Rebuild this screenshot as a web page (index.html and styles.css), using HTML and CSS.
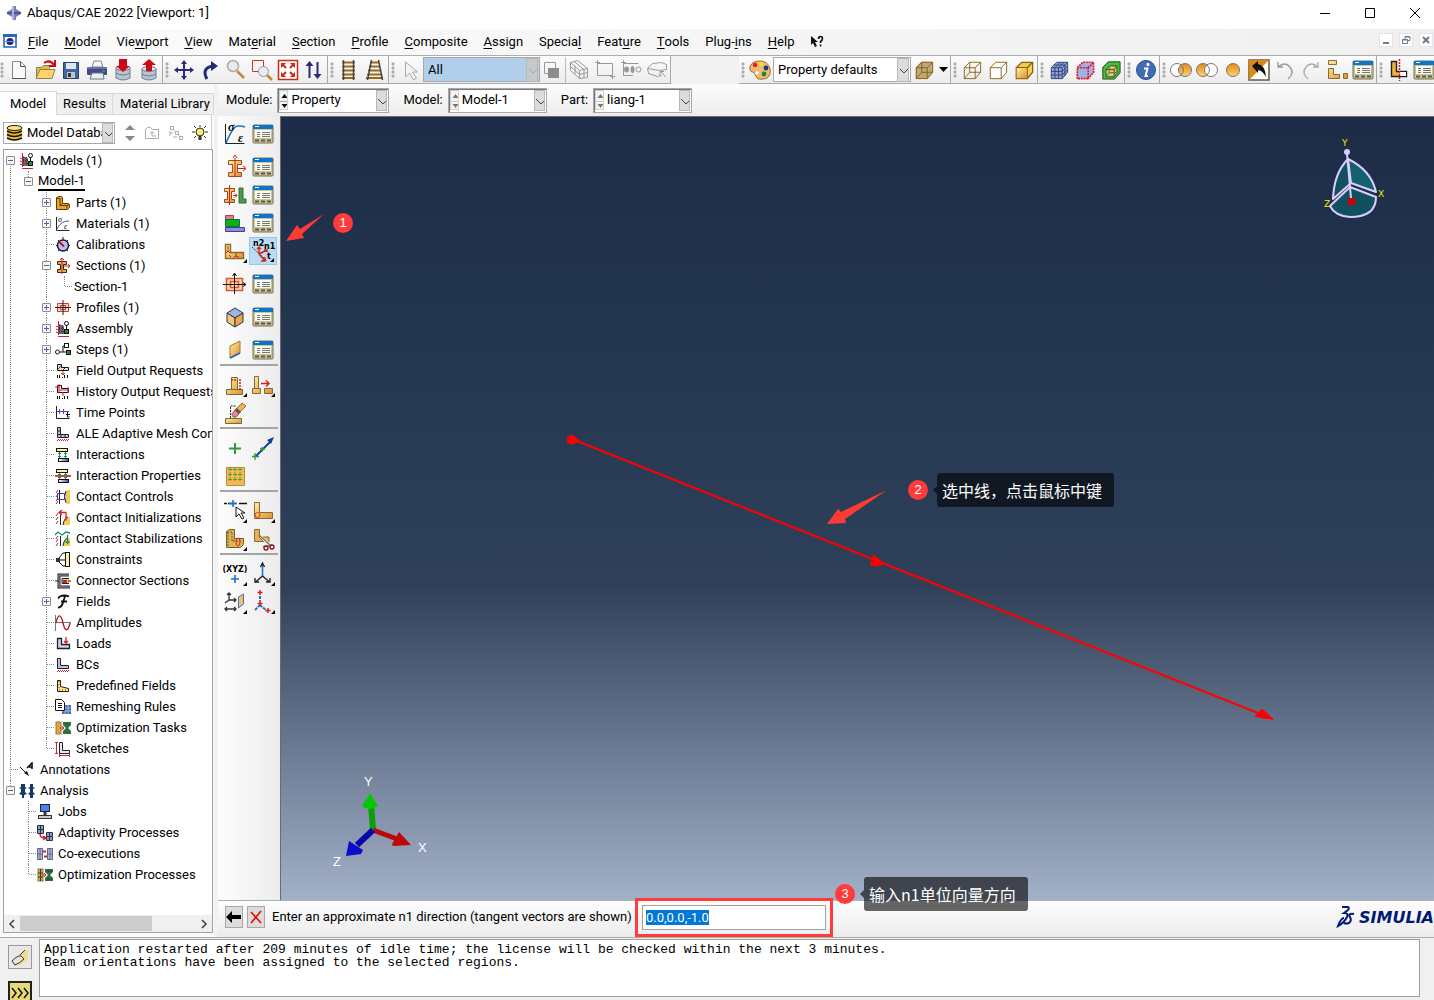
FILE: index.html
```html
<!DOCTYPE html>
<html lang="en">
<head>
<meta charset="utf-8">
<title>Abaqus/CAE 2022 [Viewport: 1]</title>
<link rel="stylesheet" href="styles.css">
</head>
<body>
<svg class="defs" aria-hidden="true">
  <defs>
    <linearGradient id="gold" x1="0" y1="0" x2="1" y2="1"><stop offset="0" stop-color="#fff0a0"/><stop offset="1" stop-color="#dc9030"/></linearGradient>
    <linearGradient id="orange" x1="0" y1="0" x2="0" y2="1"><stop offset="0" stop-color="#e08a10"/><stop offset="1" stop-color="#ffd27a"/></linearGradient>
    <linearGradient id="bluefade"><stop offset="0" stop-color="#fff"/><stop offset="1" stop-color="#3050a0"/></linearGradient>
    <!-- manager window -->
    <symbol id="mgr" viewBox="0 0 22 20"><rect x="1" y="1" width="20" height="18" rx="1" fill="#c9c39a" stroke="#77714e"/><rect x="1" y="1" width="20" height="4" fill="#0b74cc"/><path d="M3 2.500h4" stroke="#fff"/><rect x="3" y="6" width="16" height="8" fill="#fbfbf4"/><path d="M5 8.500h3m2 0h8M5 10.500h3m2 0h8M5 12.500h3m2 0h8" stroke="#77766c"/><path d="M3 16.500h4m2 0h4m2 0h4" stroke="#5c5a44" stroke-width="2"/></symbol>
    <symbol id="cubewire" viewBox="0 0 22 22"><path d="M2.500 8.500h12v12h-12zM8.500 2.500h12v11h-12zM2.500 8.500l6-6M14.500 8.500l6-6M14.500 20.500l6-7M2.500 20.500l6-7" fill="none" stroke="#86600f"/></symbol>
    <symbol id="tLmodel" viewBox="0 0 16 16"><path d="M4 3v10h10v-4h-5V5z" fill="#6b6b7c"/><path d="M4.500 4v10M7.500 4v10M4 7.500h5M4 10.500h9" stroke="#333" stroke-dasharray="1 1"/><path d="M3.500 0v14M1 5l2 1M1 8l2 1M1 11l2 1M3 15.500h11" stroke="#d02030"/><circle cx="11.500" cy="2.500" r="2" fill="#fff" stroke="#111"/><path d="M11.500 4v5" stroke="#111"/><rect x="9.500" y="8.500" width="4" height="4" fill="#2f8a2f" stroke="#111"/></symbol>
    <symbol id="tPart" viewBox="0 0 16 16"><path d="M1.500 2.500l2-1h3l1 1v6l6 0 1 1v3l-2 2h-11z" fill="#e8a32c" stroke="#5e3a06"/><path d="M2 3.500h3v7h7v3m-7-3l2-2m5 2l2-1" fill="none" stroke="#5e3a06"/></symbol>
    <symbol id="tMat" viewBox="0 0 16 16"><path d="M1.500 1v13.500h13" fill="none" stroke="#222"/><path d="M2 13C4 9 7 5 14 5" fill="none" stroke="#3a4fb0"/><text x="3" y="6" class="greek">σ</text><text x="9" y="13" class="greek">ε</text></symbol>
    <symbol id="tCal" viewBox="0 0 16 16"><circle cx="8" cy="8.500" r="5.500" fill="#b4c4f0" stroke="#181830" stroke-width="1.400"/><path d="M8 0v3M1 8.500h2m10 0h2M3 3l2 2m8-2l-2 2M3 14l2-2m8 2l-2-2" stroke="#181830"/><path d="M4 4.500l5 5" stroke="#c01020" stroke-width="2"/></symbol>
    <symbol id="tSec" viewBox="0 0 16 16"><path d="M2.500 3.500h9v3h-3v5h3v3h-9v-3h3v-5h-3z" fill="#e8b050" stroke="#3a2808"/><path d="M7 0v16M9 8h6m-2-2l2 2-2 2M5 2l2-2 2 2" fill="none" stroke="#d02030"/></symbol>
    <symbol id="tProf" viewBox="0 0 16 16"><path d="M2.500 3.500h11v8h-11zM5.500 5.500h5v4h-5z" fill="#fbd3c0" stroke="#d03a2c"/><path d="M8 0v15M0 7.500h16" stroke="#222"/></symbol>
    <symbol id="tStep" viewBox="0 0 16 16"><circle cx="2.500" cy="10" r="2" fill="#fff" stroke="#111"/><path d="M5 10h3V4h3M8 10h4" fill="none" stroke="#111"/><rect x="9.500" y="1.500" width="4" height="4" fill="#fff" stroke="#111"/><rect x="11.500" y="8.500" width="4" height="4" fill="#2f8a2f" stroke="#111"/></symbol>
    <symbol id="tField" viewBox="0 0 16 16"><path d="M2.500 1.500h4v3h7v3h-11z" fill="#d8ecc0" stroke="#111"/><path d="M3 6l3-3m2 4l2-2" stroke="#c03"/><path d="M8 8v3M6 10l2 2 2-2" stroke="#d02030" fill="none"/><path d="M2.500 12v3m2-3v3m3 0v-1m2-2v3m3-3v3" stroke="#111"/></symbol>
    <symbol id="tHist" viewBox="0 0 16 16"><path d="M2.500 1.500h4v3h7v4h-11z" fill="#fff" stroke="#111"/><path d="M0 3h5M4 6h9M4 0v9M13 3v6M8 8v4" stroke="#d02030"/><path d="M2.500 12v3m2-3v3m3 0v-1m2-2v3m3-3v3" stroke="#111"/></symbol>
    <symbol id="tTime" viewBox="0 0 16 16"><path d="M1.500 1v12.500h13" fill="none" stroke="#222"/><path d="M2 6.500h12M4.500 4v5m4-5v5" stroke="#4050c0"/><path d="M12.500 7v5h2M11 9.500h4" stroke="#111" fill="none"/></symbol>
    <symbol id="tBC" viewBox="0 0 16 16"><path d="M2.500 1.500h3v7h8v3h-11z" fill="#b4c4e4" stroke="#222"/><path d="M2 15l2-2m0 2l2-2m0 2l2-2m0 2l2-2m0 2l2-2m0 2l2-2" stroke="#d02030"/></symbol>
    <symbol id="tALE" viewBox="0 0 16 16"><path d="M2.500 1.500h3v7h8v3h-11zM2 5h4m-4 3.500h4v3m4-3v3" fill="#b4c4e4" stroke="#222"/><path d="M2 15l2-2m0 2l2-2m0 2l2-2m0 2l2-2m0 2l2-2m0 2l2-2" stroke="#d02030"/></symbol>
    <symbol id="tInt" viewBox="0 0 16 16"><rect x="1.500" y="1.500" width="11" height="3" fill="#fff2a0" stroke="#111"/><rect x="3.500" y="11.500" width="10" height="3" fill="url(#bluefade)" stroke="#111"/><path d="M4.500 5v6m6-6v6M3 6.500h3m3 0h3M3 9.500h3m3 0h3" stroke="#159058"/></symbol>
    <symbol id="tIntP" viewBox="0 0 16 16"><use href="#tInt"/><path d="M0 8h16" stroke="#cc4444" stroke-width="2"/></symbol>
    <symbol id="tCon" viewBox="0 0 16 16"><path d="M15 1h-3q-4 5 0 14h3z" fill="#f0cc50"/><path d="M1 4l2-3M1 8l2-3M1 12l2-3M1 15l2-3" stroke="#b02030"/><path d="M4.500 1v14M11 2q-3 5 0 12" fill="none" stroke="#222"/><path d="M2.500 4.500h7v6h-7z" fill="none" stroke="#3333dd"/></symbol>
    <symbol id="tCinit" viewBox="0 0 16 16"><path d="M15 7h-4q-3 4-3 8h7z" fill="#f0cc50"/><path d="M1 6l2-3M1 10l2-3M1 14l2-3" stroke="#b02030"/><path d="M5.500 5v10M8 15q1-7 5-8" fill="none" stroke="#222"/><path d="M4 2.500h7v8M7 0L4 2.500l3 2.500" fill="none" stroke="#d02030" stroke-width="1.300"/></symbol>
    <symbol id="tCstab" viewBox="0 0 16 16"><path d="M15 7h-4q-3 4-3 8h7z" fill="#f0cc50"/><path d="M1 8l2-3M1 11l2-3M1 15l2-3" stroke="#b02030"/><path d="M5.500 5v10M8 15q1-7 5-8" fill="none" stroke="#222"/><path d="M0 4l3-3 4 3 4-3 4 1M12.500 4v9m-2-2h4" fill="none" stroke="#159058" stroke-width="1.300"/></symbol>
    <symbol id="tCons" viewBox="0 0 16 16"><rect x="10.500" y=".500" width="4" height="14" fill="#fff2a0" stroke="#111"/><path d="M10 1H8L4 6m0 4l4 4h2M4 8h6" fill="none" stroke="#111"/><rect x="1" y="6" width="4" height="4" fill="#334"/></symbol>
    <symbol id="tConn" viewBox="0 0 16 16"><path d="M14 2H4v12h11" fill="none" stroke="#222" stroke-width="3"/><path d="M14 2H4v12h11" fill="none" stroke="#aab" stroke-width="1"/><path d="M14 5.500H7v5h7" fill="#f0cc50" stroke="#222"/><rect x="8" y="7" width="4" height="3" fill="#c02030"/><path d="M0 8h4m9 0h3" stroke="#222"/></symbol>
    <symbol id="tFf" viewBox="0 0 16 16"><path d="M5 2.500q4-2 9 0M10 2.500C8 7 8 14 3 13.500M6 7.500h6M5 2.500q-2 1-1 2" fill="none" stroke="#111" stroke-width="1.800"/></symbol>
    <symbol id="tAmp" viewBox="0 0 16 16"><path d="M.500 0v16M0 7.500h16" stroke="#777"/><path d="M1 8C3-2 6-1 8 8s5 9 7 0" fill="none" stroke="#b02030" stroke-width="1.400"/></symbol>
    <symbol id="tLoad" viewBox="0 0 16 16"><path d="M2.500 2.500h4v6h8v4h-12z" fill="#c4d2ea" stroke="#222" stroke-width="1.300"/><path d="M11 1v6M9 5l2 2 2-2" fill="none" stroke="#d02030" stroke-width="1.300"/></symbol>
    <symbol id="tPre" viewBox="0 0 16 16"><path d="M2.500 2.500h3v6l8 2v3h-11z" fill="#f4ec70" stroke="#222"/><path d="M4 3v9h8" fill="none" stroke="#c04" stroke-dasharray="1 2"/></symbol>
    <symbol id="tRem" viewBox="0 0 16 16"><rect x="7" y="6" width="9" height="9" fill="#4868a8"/><path d="M7 9h9M7 12h9M10 6v9m3-9v9" stroke="#9ab8ea"/><path d="M.500.500h6l3 3v8h-9z" fill="#fff" stroke="#111"/><path d="M3 4.500h4M3 6.500h4M3 8.500h4" stroke="#111"/></symbol>
    <symbol id="tOpt" viewBox="0 0 16 16"><rect x="1" y="2" width="5" height="12" fill="#e8a32c" stroke="#8a7a60"/><path d="M8 2h8v3l-3 3 3 3v3H8v-3l3-3-3-3z" fill="#2c6e3c"/><path d="M5 8h4M7 6l2 2-2 2" fill="none" stroke="#d02030"/></symbol>
    <symbol id="tSk" viewBox="0 0 16 16"><path d="M4.500 1.500h3v8h7v3h-10z" fill="#e4e8f0" stroke="#222"/><path d="M1.500 1v12M0 1.500h3M0 12.500h3M4 14.500h11M4.500 13v3m10-3v3" stroke="#d02030"/></symbol>
    <symbol id="tAnn" viewBox="0 0 16 16"><path d="M1 5l8 8" stroke="#111"/><path d="M10 14l-5-3 3-2z" fill="#111"/><path d="M8 6l5-5v6M10 5h3" fill="none" stroke="#111" stroke-width="1.600"/></symbol>
    <symbol id="tAna" viewBox="0 0 16 16"><path d="M2 1h4v3l2 1-2 1v3l2 2-3 1v3H3v-3L0 11l2-2V6L0 5l2-1zM11 1h3v3l2 1-2 1v3l2 2-2 1v3h-3v-3l-2-1 2-2V6L9 5l2-1z" fill="#123a66"/></symbol>
    <symbol id="tJob" viewBox="0 0 16 16"><rect x="3.500" y=".500" width="9" height="7" fill="#4d7df0" stroke="#223"/><path d="M8 8v3" stroke="#333" stroke-width="3"/><rect x="1.500" y="11.500" width="13" height="3" fill="#c8c8c8" stroke="#333"/></symbol>
    <symbol id="tAda" viewBox="0 0 16 16"><path d="M.500.500h6v8h-6zM3.500.500v8M0 4.500h6M9.500 7.500h6v8h-6zM12.500 7v8M9 11.500h6" fill="#7fa0dc" stroke="#333"/><path d="M3 9q0 4 5 4M6 11l3 2-3 2" fill="none" stroke="#d02030" stroke-width="1.500"/></symbol>
    <symbol id="tCo" viewBox="0 0 16 16"><path d="M.500 2.500h5v11h-5zM10.500 2.500h5v11h-5zM3 2v12M13 2v12M0 8h5m6 0h5" fill="#a4baea" stroke="#667"/><path d="M6 5.500h3m-2 5h3" stroke="#d02030" stroke-width="2"/></symbol>
    <symbol id="tOptP" viewBox="0 0 16 16"><use href="#tOpt"/><path d="M3.500 2v12M1 6h5M1 10h5M10 4h5M10 12h5" stroke="#243"/></symbol>
  </defs>
</svg>

<div class="app">
  <header class="titlebar">
    <svg width="16" height="16" viewBox="0 0 16 16"><path d="M6 1h4v3l5 3v2l-5 3v3H6v-3L1 9V7l5-3z" fill="#7b7db8"/><path d="M1 8h14" stroke="#26286a"/><path d="M6 1h2v14H6z" fill="#b0b2dc"/></svg>
    <span class="title">Abaqus/CAE 2022 [Viewport: 1]</span>
    <div class="winbtns">
      <button aria-label="Minimize"><svg width="12" height="12"><path d="M1 6.500h10" stroke="#000"/></svg></button>
      <button aria-label="Maximize"><svg width="12" height="12"><path d="M1.500 1.500h9v9h-9z" fill="none" stroke="#000"/></svg></button>
      <button aria-label="Close"><svg width="12" height="12"><path d="M1 1l10 10M11 1L1 11" stroke="#000"/></svg></button>
    </div>
  </header>

  <nav class="menubar">
    <svg class="doc" width="14" height="14" viewBox="0 0 14 14"><path d="M1 1h12v12H1z" fill="#fff" stroke="#2a66c0" stroke-width="1.600"/><path d="M0 1.500h14" stroke="#2a66c0" stroke-width="3"/><circle cx="7" cy="7.500" r="3.500" fill="#23247c"/><path d="M2 7.500h10" stroke="#8890c8"/></svg>
    <button><u>F</u>ile</button><button><u>M</u>odel</button><button>Vie<u>w</u>port</button><button><u>V</u>iew</button><button>Mat<u>e</u>rial</button><button><u>S</u>ection</button><button><u>P</u>rofile</button><button><u>C</u>omposite</button><button><u>A</u>ssign</button><button>Specia<u>l</u></button><button>Feat<u>u</u>re</button><button><u>T</u>ools</button><button>Plug-<u>i</u>ns</button><button><u>H</u>elp</button>
    <button aria-label="Context help"><svg width="14" height="14"><path d="M1 1v9l2-2 2 4 2-1-2-4h3z" fill="#111"/><path d="M8.500 4q0-2.500 2-2.500t2 2-2 3V8m0 1.500v2" fill="none" stroke="#111" stroke-width="1.600"/></svg></button>
    <div class="mdi">
      <button aria-label="Minimize viewport"><svg width="12" height="12"><path d="M3 9h6" stroke="#6c7c8c" stroke-width="2"/></svg></button>
      <button aria-label="Restore viewport"><svg width="12" height="12"><path d="M2.500 5.500h5v4h-5zM5 5V2.500h5v4H8M5 3h5M2 6h6" fill="none" stroke="#6c7c8c"/></svg></button>
      <button aria-label="Close viewport"><svg width="12" height="12"><path d="M3 3l6 6M9 3L3 9" stroke="#6c7c8c" stroke-width="2"/></svg></button>
    </div>
  </nav>

  <div class="toolbar">
    <div class="group first"><i class="grip"></i>
      <button aria-label="New"><svg width="22" height="22"><path d="M4.500 2.500h8l5 5v12h-13z" fill="#fafafa" stroke="#888"/><path d="M12.500 2.500v5h5M4 19.500h14" fill="none" stroke="#555"/></svg></button>
      <button aria-label="Open"><svg width="22" height="22"><path d="M2.500 19V8.500h5l2-2h6v3" fill="#e8b84a" stroke="#8a8060"/><path d="M2 19.500l4-9h15l-3 9z" fill="#fbd566" stroke="#8a8060"/><path d="M10 4q6-4 10 2m1-5v6h-6" fill="none" stroke="#d00a14" stroke-width="2"/></svg></button>
      <button aria-label="Save"><svg width="22" height="22"><path d="M3.500 3.500h15v16h-15z" fill="#3b66a8" stroke="#27406c"/><path d="M6 4h10v6H6z" fill="#dfe6ee"/><path d="M7 13h8v6H7z" fill="#c6c6b8"/><path d="M8 14h3v4H8z" fill="#333"/></svg></button>
      <button aria-label="Print"><svg width="22" height="22"><path d="M6 8l2-6h7l2 6z" fill="#f4f4f4" stroke="#888"/><rect x="1" y="8" width="20" height="8" rx="1" fill="#46488c"/><path d="M1 9h20" stroke="#9092c8"/><path d="M6 14h11l1 6H4z" fill="#e8eef8" stroke="#777"/><path d="M16 12h3" stroke="#3c3"/></svg></button>
      <button aria-label="Import"><svg width="22" height="22"><path d="M4 9v10q7 4 14 0V9z" fill="#b9c4d2" stroke="#6c7c90"/><ellipse cx="11" cy="9" rx="7" ry="2.500" fill="#e2e8ee" stroke="#6c7c90"/><path d="M4 14q7 4 14 0" fill="none" stroke="#6c7c90"/><path d="M7 0h8v7h3l-7 6-7-6h3z" fill="#cc0a14"/></svg></button>
      <button aria-label="Export"><svg width="22" height="22"><path d="M4 10v9q7 4 14 0v-9z" fill="#b9c4d2" stroke="#6c7c90"/><ellipse cx="11" cy="10" rx="7" ry="2.500" fill="#e2e8ee" stroke="#6c7c90"/><path d="M4 15q7 4 14 0" fill="none" stroke="#6c7c90"/><path d="M8 12V6H4l7-6 7 6h-4v6z" fill="#cc0a14"/></svg></button>
    </div>
    <div class="group"><i class="grip"></i>
      <button aria-label="Pan"><svg width="22" height="22"><path d="M3 11h16M11 3v16" stroke="#252a7c" stroke-width="2"/><path d="M11 1l3 4H8zM11 21l3-4H8zM1 11l4-3v6zM21 11l-4-3v6z" fill="#252a7c"/></svg></button>
      <button aria-label="Rotate"><svg width="22" height="22"><path d="M8 20Q2 9 14 7" fill="none" stroke="#252a7c" stroke-width="3"/><path d="M12 2l7 5-7 5z" fill="#252a7c"/></svg></button>
      <button aria-label="Magnify"><svg width="22" height="22"><path d="M12 12l7 7" stroke="#c08838" stroke-width="2.500"/><circle cx="8" cy="7" r="5.500" fill="#e8ecf0" stroke="#aaa" stroke-width="1.500"/></svg></button>
      <button aria-label="Box zoom"><svg width="22" height="22"><path d="M1.500 1.500h11v11h-11z" fill="none" stroke="#d03020"/><path d="M15 15l6 6" stroke="#c08838" stroke-width="2.500"/><circle cx="12.500" cy="12.500" r="5" fill="#e8ecf0" stroke="#999"/></svg></button>
      <button aria-label="Auto-fit"><svg width="22" height="22"><path d="M1.500 1.500h19v19h-19z" fill="#fff" stroke="#cc2a1c" stroke-width="1.500"/><path d="M4 4h5L4 9zM18 4v5l-5-5zM4 18v-5l5 5zM18 18h-5l5-5z" fill="#cc2a1c"/><path d="M5 5l4 4M17 5l-4 4M5 17l4-4M17 17l-4-4" stroke="#cc2a1c" stroke-width="2"/></svg></button>
      <button aria-label="Cycle views"><svg width="22" height="22"><path d="M6.500 6v13M14.500 3v13" stroke="#252a7c" stroke-width="2"/><path d="M6.500 2l4 5h-8zM14.500 20l4-5h-8z" fill="#252a7c"/></svg></button>
    </div>
    <div class="group"><i class="grip"></i>
      <button aria-label="Parallel"><svg width="22" height="22"><path d="M4 3.500h13M4 7.500h13M4 11.500h13M4 15.500h13M4 19h13" stroke="#9a6a1e" stroke-width="2"/><path d="M5.500 1v20M15.500 1v20" stroke="#444" stroke-width="1.500"/></svg></button>
      <button aria-label="Perspective"><svg width="22" height="22"><path d="M6 3.500h9M5 7.500h11M4 11.500h13M3 15.500h15M2 19h17" stroke="#9a6a1e" stroke-width="2"/><path d="M7.500 1l-4 20M14.500 1l4 20" stroke="#444" stroke-width="1.500"/></svg></button>
    </div>
    <div class="group"><i class="grip"></i>
      <button aria-label="Select"><svg width="22" height="22"><path d="M6.500 3v15l4-4 4 7 3-2-4-6h5z" fill="#f4f4f4" stroke="#aaa"/></svg></button>
      <div class="combo all"><select aria-label="Selection filter"><option>All</option></select><svg class="arr" width="12" height="24"><path d="M2 10l4 4 4-4" fill="none" stroke="#9aa"/></svg></div>
      <button class="bar" aria-label="Display groups"><svg width="22" height="22"><path d="M2.500 3.500h11v11h-11z" fill="none" stroke="#999"/><rect x="6" y="9" width="11" height="10" fill="#8c8c8c"/></svg></button>
      <button aria-label="Select inside"><svg width="22" height="22"><path d="M2.500 3.500l7-2 10 8v9l-8 1-9-8zM2.500 3.500l9 8 8-2M11.500 11.500v8M6 2.500l10 8v8M2.500 7.500l9 8 8-2M7 7v8" fill="none" stroke="#999"/></svg></button>
      <button aria-label="Rectangle select"><svg width="22" height="22"><path d="M3.500 4.500h15v12h-15zM1 3.500h5M3.500 1v5M16 17.500h5M18.500 15v5" fill="none" stroke="#999"/></svg></button>
      <button aria-label="Select points"><svg width="22" height="22"><path d="M3.500 17V4.500h15M1 3.500h5M3.500 1v5M3 16.500h10" fill="none" stroke="#999"/><ellipse cx="6.500" cy="10.500" rx="2.500" ry="3" fill="#999"/><ellipse cx="12.500" cy="10.500" rx="2" ry="3.500" fill="#999"/><circle cx="18.500" cy="10.500" r="2.500" fill="none" stroke="#999"/></svg></button>
      <button aria-label="Select shape"><svg width="22" height="22"><path d="M1.500 9.500l5-5 9-1 5 2v5l-7 1-12-2 1 5 9 3 4-1M14 12l6 6M14 12.500h4m-4 0v4" fill="none" stroke="#999"/></svg></button>
    </div>
    <div class="group apart"><i class="grip"></i>
      <button aria-label="Color code"><svg width="22" height="22"><path d="M11 2C3 2 0 7 1 11c1 3 4 1 5 4s2 6 8 5c6 0 8-5 7-10s-5-8-10-8z" fill="#f0b870" stroke="#9c6a30"/><circle cx="6" cy="6" r="2.200" fill="#d22"/><circle cx="12" cy="5" r="2.200" fill="#f0e020"/><circle cx="17" cy="9" r="2.400" fill="#113a8c"/><circle cx="15" cy="15" r="2.400" fill="#188a40"/><circle cx="8" cy="14" r="1.800" fill="#fff"/></svg></button>
      <div class="combo prop"><select aria-label="Color code mapping"><option>Property defaults</option></select><svg class="arr" width="12" height="24"><path d="M2 10l4 4 4-4" fill="none" stroke="#444"/></svg></div>
      <button aria-label="Render style"><svg width="20" height="20" viewBox="0 0 22 22"><path d="M2 8l6-6h13v12l-6 7H2z" fill="#bfa878"/><use href="#cubewire"/></svg></button>
      <button class="drop" aria-label="More styles"><svg width="9" height="6"><path d="M0 0h9L4.500 5z" fill="#000"/></svg></button>
    </div>
    <div class="group"><i class="grip"></i>
      <button aria-label="Wireframe"><svg width="20" height="20"><use href="#cubewire"/></svg></button>
      <button aria-label="Hidden"><svg width="20" height="20" viewBox="0 0 22 22"><path d="M2.500 8.500h12v12h-12zM2.500 8.500l6-6h12v11l-6 7M14.500 8.500l6-6" fill="#fff" stroke="#86600f"/></svg></button>
      <button aria-label="Shaded"><svg width="20" height="20" viewBox="0 0 22 22"><path d="M2.500 8.500h12v12h-12zM2.500 8.500l6-6h12v11l-6 7M14.500 8.500l6-6" fill="#f4cc50" stroke="#86600f" stroke-width="1.400"/><path d="M3 9h11v11H3z" fill="url(#gold)"/></svg></button>
    </div>
    <div class="group"><i class="grip"></i>
      <button aria-label="Mesh"><svg width="20" height="20" viewBox="0 0 22 22"><path d="M2.500 8.500h12v12h-12zM2.500 8.500l6-6h12v11l-6 7M14.500 8.500l6-6M6.500 8.500v12M10.500 8.500v12M2.500 12.500h12M2.500 16.500h12M6.500 8.500l6-6M10.500 8.500l6-6M14.500 12.500l6-6M14.500 16.500l6-6M5 5.500h12.500v12" fill="#8fa4d8" stroke="#2c3c70"/></svg></button>
      <button aria-label="Seeds"><svg width="20" height="20" viewBox="0 0 22 22"><path d="M2.500 8.500h12v12h-12zM2.500 8.500l6-6h12v11l-6 7M14.500 8.500l6-6" fill="#a0b2e4"/><path d="M2.500 8.500h12v12h-12zM2.500 8.500l6-6h12v11l-6 7M14.500 8.500l6-6" fill="none" stroke="#e01020" stroke-width="1.800" stroke-dasharray="2 1"/></svg></button>
      <button aria-label="Geometry"><svg width="20" height="20" viewBox="0 0 22 22"><path d="M2 8l6-6h13v12l-6 7H2z" fill="#3cc43c" stroke="#223c14"/><path d="M5.500 10.500h9v8h-9zM5.500 10.500l4-4h8v8l-3 4M14.500 10.500l3-4" fill="#d8cc6c" stroke="#44441a"/><path d="M9 7v7h8M9 14l-3 4" fill="none" stroke="#555"/></svg></button>
    </div>
    <div class="group"><i class="grip"></i>
      <button aria-label="Query"><svg width="22" height="22"><circle cx="11" cy="11" r="9.500" fill="#3f6cb4" stroke="#27508e"/><path d="M12 4.500h2v2h-2z" stroke="#fff" fill="#fff"/><path d="M9 9.500h3.500l-2 7.500h2.500" fill="none" stroke="#fff" stroke-width="2"/></svg></button>
    </div>
    <div class="group"><i class="grip"></i>
      <button aria-label="Intersect"><svg width="22" height="22"><circle cx="7" cy="11" r="6.500" fill="#fff" stroke="#777"/><circle cx="15" cy="11" r="6.500" fill="url(#orange)" stroke="#777"/><path d="M11 6q5 5 0 10" fill="none" stroke="#777"/></svg></button>
      <button aria-label="Remove"><svg width="22" height="22"><circle cx="7" cy="11" r="6.500" fill="url(#orange)" stroke="#777"/><circle cx="15" cy="11" r="6.500" fill="#fff" stroke="#777"/><path d="M11 6q5 5 0 10" fill="none" stroke="#777"/></svg></button>
      <button aria-label="Replace"><svg width="22" height="22"><circle cx="11" cy="11" r="6.500" fill="url(#orange)" stroke="#777"/></svg></button>
      <button aria-label="Replace all"><svg width="22" height="22"><path d="M1 1h20v20H1z" fill="#fff" stroke="#665a3c" stroke-width="1.500"/><path d="M1 1h20L1 21z" fill="#dd8a14"/><path d="M4 7l6-5v3q7 1 8 13-4-7-8-7v3z" fill="#111"/></svg></button>
      <button aria-label="Undo"><svg width="22" height="22"><path d="M4 3v5h5M4 8q7-6 12 0t-2 12" fill="none" stroke="#999" stroke-width="1.300"/></svg></button>
      <button aria-label="Redo"><svg width="22" height="22"><path d="M18 3v5h-5M18 8q-7-6-12 0t2 12" fill="none" stroke="#aaa" stroke-width="1.300"/></svg></button>
      <button aria-label="Parts"><svg width="22" height="22"><path d="M2.500 1.500h8v4h-8zM2.500 9.500h5v6h6v4h-11zM17.500 14.500h4v5h-4z" fill="url(#gold)" stroke="#8a6a30"/></svg></button>
      <button aria-label="Display group manager"><svg width="22" height="20"><use href="#mgr"/></svg></button>
    </div>
    <div class="group"><i class="grip"></i>
      <button aria-label="View cut"><svg width="22" height="22"><path d="M4.500 2.500h5v10h10v5h-15z" fill="#f0b040" stroke="#222" stroke-width="1.400"/><path d="M13 13h6v4h-6z" fill="#fff"/><path d="M12.500 0v22" stroke="#e01020" stroke-width="1.500" stroke-dasharray="2 1"/></svg></button>
      <button aria-label="View cut manager"><svg width="22" height="20"><use href="#mgr"/></svg></button>
    </div>
  </div>

  <div class="main">
    <aside class="side">
      <div class="tabs"><button class="on">Model</button><button>Results</button><button class="lib">Material Library</button></div>
      <div class="dbrow">
        <div class="combo db"><svg width="20" height="18"><path d="M2 3v11q8 5 15 0V3z" fill="#e8b82c"/><ellipse cx="9.500" cy="4" rx="7.500" ry="2.500" fill="#ffe27a" stroke="#111"/><path d="M2 7q7 4 15 0M2 10.500q7 4 15 0M2 14q7 4 15 0" fill="none" stroke="#111" stroke-width="1.500"/></svg><select aria-label="Database"><option>Model Database</option></select><svg class="arr" width="11" height="20"><path d="M2 8l4 4 4-4" fill="none" stroke="#444"/></svg></div>
        <button aria-label="Expand or collapse"><svg width="10" height="16"><path d="M5 0l5 5H0zM5 16l5-5H0z" fill="#888"/></svg></button>
        <button aria-label="Up"><svg width="16" height="14"><path d="M1.500 12.500v-9l2-2h3l2 2h6v9zM8 10V6M6 7.500L8 5.500l2 2M8 10h4" fill="none" stroke="#aaa"/></svg></button>
        <button aria-label="Filter"><svg width="16" height="16"><path d="M2.500 1.500h3v3h-3zM7.500 6.500h3v3h-3zM11.500 11.500h3v3h-3zM5 4l3 3m2 2l2 3M2 6v5m0-3h3m0 4h4" fill="none" stroke="#aaa"/></svg></button>
        <button aria-label="Tips"><svg width="16" height="16"><circle cx="8" cy="7" r="4" fill="#fbe870" stroke="#333"/><path d="M6.500 11h3v4h-3z" fill="#333"/><path d="M8 0v2M0 7h3m10 0h3M2 1l2 2m10-2l-2 2M2 13l2-2m10 2l-2-2" stroke="#333"/></svg></button>
      </div>
      <div class="treebox">
        <ul class="tree">
          <li class="top"><div class="row"><button class="tg" aria-label="Collapse"></button><svg class="ic"><use href="#tLmodel"/></svg><span>Models (1)</span></div>
            <ul>
              <li><div class="row bare"><button class="tg" aria-label="Collapse"></button><span class="cur">Model-1</span></div>
                <ul>
                  <li><div class="row"><button class="tg plus" aria-label="Expand"></button><svg class="ic"><use href="#tPart"/></svg><span>Parts (1)</span></div></li>
                  <li><div class="row"><button class="tg plus" aria-label="Expand"></button><svg class="ic"><use href="#tMat"/></svg><span>Materials (1)</span></div></li>
                  <li><div class="row"><i class="tick"></i><svg class="ic"><use href="#tCal"/></svg><span>Calibrations</span></div></li>
                  <li><div class="row"><button class="tg" aria-label="Collapse"></button><svg class="ic"><use href="#tSec"/></svg><span>Sections (1)</span></div>
                    <ul><li><div class="row bare"><i class="tick"></i><span>Section-1</span></div></li></ul></li>
                  <li><div class="row"><button class="tg plus" aria-label="Expand"></button><svg class="ic"><use href="#tProf"/></svg><span>Profiles (1)</span></div></li>
                  <li><div class="row"><button class="tg plus" aria-label="Expand"></button><svg class="ic"><use href="#tLmodel"/></svg><span>Assembly</span></div></li>
                  <li><div class="row"><button class="tg plus" aria-label="Expand"></button><svg class="ic"><use href="#tStep"/></svg><span>Steps (1)</span></div></li>
                  <li><div class="row"><i class="tick"></i><svg class="ic"><use href="#tField"/></svg><span>Field Output Requests</span></div></li>
                  <li><div class="row"><i class="tick"></i><svg class="ic"><use href="#tHist"/></svg><span>History Output Requests</span></div></li>
                  <li><div class="row"><i class="tick"></i><svg class="ic"><use href="#tTime"/></svg><span>Time Points</span></div></li>
                  <li><div class="row"><i class="tick"></i><svg class="ic"><use href="#tALE"/></svg><span>ALE Adaptive Mesh Constraints</span></div></li>
                  <li><div class="row"><i class="tick"></i><svg class="ic"><use href="#tInt"/></svg><span>Interactions</span></div></li>
                  <li><div class="row"><i class="tick"></i><svg class="ic"><use href="#tIntP"/></svg><span>Interaction Properties</span></div></li>
                  <li><div class="row"><i class="tick"></i><svg class="ic"><use href="#tCon"/></svg><span>Contact Controls</span></div></li>
                  <li><div class="row"><i class="tick"></i><svg class="ic"><use href="#tCinit"/></svg><span>Contact Initializations</span></div></li>
                  <li><div class="row"><i class="tick"></i><svg class="ic"><use href="#tCstab"/></svg><span>Contact Stabilizations</span></div></li>
                  <li><div class="row"><i class="tick"></i><svg class="ic"><use href="#tCons"/></svg><span>Constraints</span></div></li>
                  <li><div class="row"><i class="tick"></i><svg class="ic"><use href="#tConn"/></svg><span>Connector Sections</span></div></li>
                  <li><div class="row"><button class="tg plus" aria-label="Expand"></button><svg class="ic"><use href="#tFf"/></svg><span>Fields</span></div></li>
                  <li><div class="row"><i class="tick"></i><svg class="ic"><use href="#tAmp"/></svg><span>Amplitudes</span></div></li>
                  <li><div class="row"><i class="tick"></i><svg class="ic"><use href="#tLoad"/></svg><span>Loads</span></div></li>
                  <li><div class="row"><i class="tick"></i><svg class="ic"><use href="#tBC"/></svg><span>BCs</span></div></li>
                  <li><div class="row"><i class="tick"></i><svg class="ic"><use href="#tPre"/></svg><span>Predefined Fields</span></div></li>
                  <li><div class="row"><i class="tick"></i><svg class="ic"><use href="#tRem"/></svg><span>Remeshing Rules</span></div></li>
                  <li><div class="row"><i class="tick"></i><svg class="ic"><use href="#tOpt"/></svg><span>Optimization Tasks</span></div></li>
                  <li><div class="row"><i class="tick"></i><svg class="ic"><use href="#tSk"/></svg><span>Sketches</span></div></li>
                </ul></li>
            </ul></li>
          <li><div class="row"><i class="tick"></i><svg class="ic"><use href="#tAnn"/></svg><span>Annotations</span></div></li>
          <li><div class="row"><button class="tg" aria-label="Collapse"></button><svg class="ic"><use href="#tAna"/></svg><span>Analysis</span></div>
            <ul>
              <li><div class="row"><i class="tick"></i><svg class="ic"><use href="#tJob"/></svg><span>Jobs</span></div></li>
              <li><div class="row"><i class="tick"></i><svg class="ic"><use href="#tAda"/></svg><span>Adaptivity Processes</span></div></li>
              <li><div class="row"><i class="tick"></i><svg class="ic"><use href="#tCo"/></svg><span>Co-executions</span></div></li>
              <li><div class="row"><i class="tick"></i><svg class="ic"><use href="#tOptP"/></svg><span>Optimization Processes</span></div></li>
            </ul></li>
        </ul>
        <div class="hscroll"><svg width="16" height="16"><path d="M10 4L6 8l4 4" fill="none" stroke="#444" stroke-width="1.600"/></svg><div class="track"><div class="thumb"></div></div><svg width="16" height="16"><path d="M6 4l4 4-4 4" fill="none" stroke="#444" stroke-width="1.600"/></svg></div>
      </div>
    </aside>

    <section class="work">
      <div class="context">
        <label for="module">Module:</label>
        <div class="combo wide"><svg class="spin" width="9" height="20"><path d="M4.500 3l3 4h-6zM4.500 17l3-4h-6z" fill="#111"/><path d="M0 10.500h9" stroke="#aaa"/></svg><select id="module"><option>Property</option></select><svg class="arr" width="11" height="21"><path d="M1 8l5 5 5-5" fill="none" stroke="#444"/></svg></div>
        <label for="model">Model:</label>
        <div class="combo"><svg class="spin" width="9" height="20"><path d="M4.500 3l3 4h-6zM4.500 17l3-4h-6z" fill="#777"/><path d="M0 10.500h9" stroke="#ccc"/></svg><select id="model"><option>Model-1</option></select><svg class="arr" width="11" height="21"><path d="M1 8l5 5 5-5" fill="none" stroke="#444"/></svg></div>
        <label for="part">Part:</label>
        <div class="combo"><svg class="spin" width="9" height="20"><path d="M4.500 3l3 4h-6zM4.500 17l3-4h-6z" fill="#777"/><path d="M0 10.500h9" stroke="#ccc"/></svg><select id="part"><option>liang-1</option></select><svg class="arr" width="11" height="21"><path d="M1 8l5 5 5-5" fill="none" stroke="#444"/></svg></div>
      </div>

      <div class="stage">
        <div class="toolbox">
          <div class="tools">
            <button aria-label="Create material"><svg width="24" height="24"><path d="M2.500 2v19.500h19" fill="none" stroke="#222"/><path d="M3 21Q10 4 15 4t7 1" fill="none" stroke="#1c72cc" stroke-width="1.600"/><text x="5" y="9" class="greekL">σ</text><text x="15" y="20" class="greekL">ε</text></svg></button>
            <button aria-label="Material manager"><svg width="22" height="20"><use href="#mgr"/></svg></button>
            <i class="gap"></i>
            <button aria-label="Create section"><svg width="24" height="24"><path d="M5.500 5.500h13v4h-4v8h4v4h-13v-4h4v-8h-4z" fill="url(#gold)" stroke="#a04a20"/><path d="M12 3v19M10 3l2-3 2 3M14 13.500h8m-2-2.500l3 2.500-3 2.500" fill="none" stroke="#d81e10"/></svg></button>
            <button aria-label="Section manager"><svg width="22" height="20"><use href="#mgr"/></svg></button>
            <button aria-label="Assign section"><svg width="24" height="24"><path d="M1.500 5.500h10v3h-3v8h3v3h-10v-3h3v-8h-3z" fill="url(#gold)" stroke="#a04a20"/><path d="M6.500 2v20M10 12.500h4m-2-2l2 2-2 2" fill="none" stroke="#d81e10"/><path d="M16 5h4v11h3v4h-7z" fill="#4a9a4e" stroke="#2c6e30"/></svg></button>
            <button aria-label="Section assignment manager"><svg width="22" height="20"><use href="#mgr"/></svg></button>
            <button aria-label="Composite layup"><svg width="24" height="24"><path d="M2.500 4.500h8v4h-8z" fill="#e08080" stroke="#a44"/><path d="M2.500 8.500h14v7h-14z" fill="#08b408" stroke="#166"/><path d="M2.500 16.500h19v4h-19z" fill="#8c8ce8" stroke="#447"/></svg></button>
            <button aria-label="Layup manager"><svg width="22" height="20"><use href="#mgr"/></svg></button>
            <button class="more" aria-label="Assign material orientation"><svg width="24" height="24"><path d="M2.500 5.500h5v8h13v6h-18z" fill="url(#gold)" stroke="#8a6a30" stroke-width="1.400"/><path d="M5 7v5l-2 2m2-2l2 2M13 14v3l-2 1m2-1l3 1M6 16l2 2" fill="none" stroke="#d81e10"/></svg></button>
            <button class="more sel" aria-label="Assign beam orientation"><svg width="26" height="24"><path d="M2 8l15 14" stroke="#333" stroke-dasharray="2 1"/><path d="M9 15V8m-2 2l2-2 2 2M9 15l8-4m-3 0h3v2M9 15l6 7m0-4v4h-4" fill="none" stroke="#d81e10" stroke-width="1.400"/><text x="3" y="7" class="lbl">n2</text><text x="14" y="10" class="lbl">n1</text><text x="17" y="20" class="lbl">t</text></svg></button>
            <i class="gap"></i>
            <button aria-label="Create profile"><svg width="24" height="24"><path d="M3.500 6.500h16v12h-16zM7.500 9.500h8v6h-8z" fill="#fbdcb0" stroke="#d8553c" stroke-width="1.500"/><path d="M11.500 2v20M0 12.500h23M9.500 4l2-3 2 3M20 10.500l3 2-3 2" fill="none" stroke="#111"/></svg></button>
            <button aria-label="Profile manager"><svg width="22" height="20"><use href="#mgr"/></svg></button>
            <i class="gap"></i>
            <button aria-label="Create skin"><svg width="24" height="24"><path d="M12 3l8 5-8 5-8-5z" fill="#9cb4e4" stroke="#334"/><path d="M4 8l8 5v9l-8-5z" fill="#f2c878" stroke="#334"/><path d="M20 8l-8 5v9l8-5z" fill="#e4a850" stroke="#334"/></svg></button>
            <button aria-label="Skin manager"><svg width="22" height="20"><use href="#mgr"/></svg></button>
            <i class="gap"></i>
            <button aria-label="Create stringer"><svg width="24" height="24"><path d="M7 8l10-5v12L7 20z" fill="url(#gold)" stroke="#a07830"/><path d="M7 20l10-5" stroke="#1c62cc" stroke-width="1.500"/></svg></button>
            <button aria-label="Stringer manager"><svg width="22" height="20"><use href="#mgr"/></svg></button>
          </div>
          <div class="tools">
            <button class="more" aria-label="Offset faces"><svg width="24" height="24"><path d="M8.500 4.500h6v12h-6zM3.500 16.500h16v5h-16z" fill="url(#gold)" stroke="#7a6a38"/><path d="M8 7h6m3-1v12" stroke="#d81e10" stroke-width="1.500" stroke-dasharray="2 1"/></svg></button>
            <button class="more" aria-label="Replace faces"><svg width="24" height="24"><path d="M3.500 3.500h4v12h-4zM1.500 15.500h8v5h-8zM13.500 15.500h8v5h-8z" fill="url(#gold)" stroke="#7a6a38"/><path d="M10 10.500h7m-2-3l3 3-3 3" fill="none" stroke="#d81e10" stroke-width="1.400"/></svg></button>
            <button aria-label="Remove faces"><svg width="24" height="24"><path d="M2.500 17.500h16v5h-16z" fill="url(#gold)" stroke="#7a6a38"/><path d="M7.500 17V5h6" fill="none" stroke="#222" stroke-dasharray="2 1"/><path d="M12 9l7-7 4 3-8 8z" fill="#f0b058" stroke="#a06830"/><path d="M12 9l2-2 4 4-3 3z" fill="#556"/><path d="M9 13l3-4 4 4-3 3q-4 1-4-3z" fill="#e08898" stroke="#854"/></svg></button>
          </div>
          <div class="tools">
            <button aria-label="Datum point"><svg width="24" height="24"><path d="M12 7v11M6 12.500h12" stroke="#2c9a3c" stroke-width="2"/></svg></button>
            <button aria-label="Datum line"><svg width="24" height="24"><path d="M4 21L20 5" stroke="#123a9c" stroke-width="1.800"/><path d="M23 1l-3 7-4-4z" fill="#123a9c"/><path d="M4 17v7M1 20.500h7M11 11v5m-2-3h5" stroke="#2c9a3c" stroke-width="1.300"/></svg></button>
            <button aria-label="Datum grid"><svg width="24" height="24"><path d="M3.500 3.500h18v18h-18z" fill="#f0b858" stroke="#c08a38"/><path d="M5 5.500h4m1 0h4m1 0h4M5 10.500h4m1 0h4m1 0h4M5 15.500h4m1 0h4m1 0h4M7 3v4m0 1v4m0 1v4M12 3v4m0 1v4m0 1v4M17 3v4m0 1v4m0 1v4" stroke="#5aa030"/></svg></button>
          </div>
          <div class="tools">
            <button class="more" aria-label="Partition edge"><svg width="24" height="24"><path d="M1 4.500h3m1 0h8m3 0h8" stroke="#111" stroke-width="1.500"/><path d="M10 1v7M6 4.500h8" stroke="#1c72cc" stroke-width="1.600"/><path d="M13 8v10l3-3 3 5 2-1-3-5h4z" fill="#fff" stroke="#111"/></svg></button>
            <button class="more" aria-label="Partition face"><svg width="24" height="24"><path d="M3.500 3.500h5v10h13v6h-18z" fill="url(#gold)" stroke="#8a6a30"/><circle cx="6.500" cy="16" r="2.500" fill="none" stroke="#d84010"/></svg></button>
            <button class="more" aria-label="Partition cell"><svg width="24" height="24"><path d="M3.500 4.500l3-2h5v9h9v6l-3 3h-14z" fill="#dcb458" stroke="#7a5a20"/><path d="M4 5h5v9h9m-9 0l3-3M5 5v15" fill="none" stroke="#7a5a20" stroke-dasharray="2 1"/><ellipse cx="15" cy="15" rx="2" ry="4" fill="none" stroke="#e02010"/></svg></button>
            <button aria-label="Cut geometry"><svg width="24" height="24"><path d="M3.500 2.500h5v8l4 4h-9zM12 10h6v5" fill="#e8b050" stroke="#8a6a30"/><path d="M8 8l11 10M12 20l9-2" stroke="#777" stroke-width="1.500"/><circle cx="15" cy="21" r="2" fill="none" stroke="#901020" stroke-width="1.300"/><circle cx="21" cy="20" r="2" fill="none" stroke="#901020" stroke-width="1.300"/></svg></button>
          </div>
          <div class="tools">
            <button class="more" aria-label="Query point"><svg width="28" height="24"><text x="14" y="10" class="lbl mid">(XYZ)</text><path d="M14 13v8m-4-4h8" stroke="#1c72cc" stroke-width="1.600"/></svg></button>
            <button class="more" aria-label="Datum csys"><svg width="24" height="24"><path d="M11.500 2v12" stroke="#1c72cc" stroke-width="1.600"/><path d="M11.500 14l-7 6m7-6l7 6M9.500 5l2-4 2 4M4 16v4h4M19 16v4h-4" fill="none" stroke="#222" stroke-width="1.400"/></svg></button>
            <button class="more" aria-label="Datum plane"><svg width="24" height="24"><path d="M15.500 7l5-3v10l-5 4z" fill="#f0c068" stroke="#3c78c0"/><path d="M6 3v7h7M6 10l-4 3M2 19h11M4 5l2-2 2 2M11 8l2 2-2 2M4 17l-2 2 2 2M11 17l2 2-2 2" fill="none" stroke="#333" stroke-width="1.300"/></svg></button>
            <button class="more" aria-label="Move csys"><svg width="24" height="24"><path d="M9 6v5m0 4l-5 5m5-5l7 6" stroke="#1c72cc" stroke-width="2" stroke-dasharray="3 1"/><path d="M9 0v5M6.500 2.500h5M9 11v5M6.500 13.500h5M17 18v5m-2.500-2.500h5" stroke="#d81e10" stroke-width="1.400"/></svg></button>
          </div>
        </div>

        <div class="viewport">
          <svg class="scene" width="100%" height="100%">
            <!-- beam with its tangent arrows -->
            <path d="M291 322L992 602" stroke="#f00" stroke-width="2"/>
            <path d="M299 324l-8-6-5 3 1 5 4 1zM603 447l-10-9-4 10 8 1zM992 602l-11-10-7 7 8 2z" fill="#f00" stroke="#f00"/>
            <path d="M288 321l2 2M591 443l2 2M978 597l2 2" stroke="#5c2030"/>
            <!-- view compass -->
            <g stroke="#dcccff" stroke-width="2" fill="#11505f" stroke-linejoin="round">
              <path d="M1067 42Q1053 56 1052 82L1070 66z"/><path d="M1067 42Q1090 53 1095 75L1070 66z" fill="#126070"/>
              <path d="M1049 89L1069 70 1095 80Q1095 100 1069 100 1054 99 1049 89zM1066 37l4 44" />
            </g>
            <circle cx="1066" cy="35" r="3" fill="#dcccff"/><rect x="1067" y="81" width="7" height="7" fill="#d00000"/>
            <g class="axisS"><text x="1061" y="29">Y</text><text x="1097" y="80">X</text><text x="1043" y="90">Z</text></g>
            <!-- triad -->
            <path d="M92 712L90 688" stroke="#08a008" stroke-width="6"/><path d="M89 676l-8 13q7 6 16 0z" fill="#0ac40a"/>
            <path d="M92 713l24 9" stroke="#b80808" stroke-width="5"/><path d="M130 728l-12-13-7 12 1 2z" fill="#c00808"/>
            <path d="M92 713L76 728" stroke="#0808a8" stroke-width="6"/><path d="M65 739l3-15 14 9-2 4z" fill="#0c0ccc"/>
            <g class="axis"><text x="83" y="669">Y</text><text x="137" y="735">X</text><text x="52" y="749">Z</text></g>
            <!-- callout arrows -->
            <path d="M5 124l11-16 3 4 24-15-22 20 2 4zM546 407l11-15 3 3 46-22-42 29 1 4z" fill="#ff3b35"/>
          </svg>
          <span class="num n1">1</span>
          <span class="num n2">2</span><span class="tip t2">选中线，点击鼠标中键</span>
          <span class="num n3">3</span><span class="tip t3">输入n1单位向量方向</span>
        </div>
      </div>

      <div class="prompt">
        <button class="pb" aria-label="Previous"><svg width="16" height="16"><path d="M0 8l6-6v4h9v4H6v4z" fill="#000"/></svg></button>
        <button class="pb" aria-label="Cancel"><svg width="16" height="16"><path d="M3 3l10 11M13 2L3 14" stroke="#e80808" stroke-width="1.600"/></svg></button>
        <label for="dir">Enter an approximate n1 direction (tangent vectors are shown)</label>
        <div class="field"><input id="dir" value="0.0,0.0,-1.0"></div>
        <div class="brand"><svg width="22" height="22"><path d="M8 1h5q3 0 1 3l-4 3q5 0 3 4-3 6-9 9 3-8 6-8M20 8q-6-1-4 3t-1 6q-3 1-5 0" fill="none" stroke="#001a72" stroke-width="2"/></svg><span>SIMULIA</span></div>
      </div>
    </section>
  </div>

  <footer class="msgs">
    <div class="msgtabs">
      <button aria-label="Messages"><svg width="20" height="20"><path d="M1 13l8-5 9-6v10l-8 6H4z" fill="#f0dc90"/><path d="M2 14q6-6 9-5l3 3q-4 4-9 6zM10 8l5-5" fill="#e8e4d8" stroke="#333"/></svg></button>
      <button class="cli" aria-label="Command line"><svg width="20" height="14"><path d="M2 2l4 5-4 5M8 2l4 5-4 5M14 2l4 5-4 5" fill="none" stroke="#111" stroke-width="1.500"/></svg></button>
    </div>
    <div class="log">Application restarted after 209 minutes of idle time; the license will be checked within the next 3 minutes.<br>Beam orientations have been assigned to the selected regions.</div>
  </footer>
</div>
<script src="main.js"></script>
</body>
</html>
```
FILE: main.js
```js
// The prompt opens with its default value selected, ready to be overtyped.
const dir = document.getElementById('dir');
dir.focus();
dir.select();
```
FILE: styles.css
```css
* { box-sizing: border-box; }
body { margin: 0; font: 13px/20px Roboto, "Noto Sans CJK SC", sans-serif; color: #000; background: #f2f2f2; }
button { border: 0; padding: 0; background: none; font: inherit; color: inherit; display: flex; align-items: center; justify-content: center; }
svg { flex: none; display: block; }
.defs { position: absolute; width: 0; height: 0; }
.app { display: flex; flex-direction: column; height: 100vh; overflow: hidden; }

.titlebar { display: flex; align-items: center; height: 29px; padding: 0 13px 3px 6px; gap: 5px; background: #fff; }
.title { flex: 1; }
.winbtns { display: flex; gap: 33px; }

.menubar { display: flex; align-items: center; height: 26px; padding: 0 1px 0 3px; background: linear-gradient(90deg, #fbfbfb, #f0f0f0); white-space: nowrap; }
.menubar > button { padding: 0 8px; }
.menubar u { text-underline-offset: 2px; }
.doc { margin-right: 3px; align-self: flex-start; margin-top: 5px; }
.mdi { display: flex; gap: 6px; margin-left: auto; align-self: flex-start; margin-top: 4px; }
.mdi button { width: 14px; height: 14px; background: #fff; border: 1px solid #e4e4e4; }

.toolbar { display: flex; height: 29px; border-top: 1px solid #adadb0; overflow: hidden; }
.group { display: flex; align-items: center; flex: none; background: linear-gradient(#fcfcfc, #ececec); border-right: 1px solid #a8a8ac; border-bottom: 1px solid #a8a8ac; }
.group > button { width: 26px; height: 26px; }
.grip { width: 8px; height: 16px; background: radial-gradient(circle at 2px 2px, #aaa 1px, transparent 2px) 2px 0 / 4px 4px repeat-y; }
.first .grip { width: 6px; background-position-x: 0; }
.group > .bar { border-right: 1px solid #bbb; }
.apart { margin-left: 68px; }
.group > .drop { width: 13px; }

.combo { display: flex; align-items: center; width: 99px; height: 25px; background: #fff; border: 1px solid #a8a8a8; box-shadow: inset 1px 1px #777; padding: 1px; }
.combo select { appearance: none; flex: 1; min-width: 0; border: 0; padding: 0 3px; background: none; font: inherit; color: #000; overflow: hidden; text-overflow: clip; }
.arr { background: #dcdcdc; border: 1px solid #b8b8b8; }
.spin { background: #f4f4f4; border: 1px solid #d0d0d0; }
.combo.all { width: 117px; background: #b1ceeb; box-shadow: none; }
.all .arr { background: #c8c8c8; }
.combo.prop { width: 138px; box-shadow: none; }
.combo.wide { width: 112px; }
.combo.db { width: 112px; height: 22px; box-shadow: none; }
.db select { padding: 0; padding-left: 2px; }

.main { display: flex; flex: 1; min-height: 0; }
.side { width: 214px; display: flex; flex-direction: column; flex: none; padding-top: 7px; background: #fafafa; }
.tabs { display: flex; align-items: flex-end; height: 24px; overflow: hidden; }
.tabs button { flex: none; height: 22px; width: 56px; background: #efefef; border: 1px solid #d8d8d8; border-left: 0; }
.tabs .on { width: 57px; height: 24px; background: #fff; border-bottom: 0; }
.tabs .lib { width: 101px; justify-content: flex-start; padding-left: 7px; white-space: nowrap; overflow: hidden; }
.dbrow { display: flex; align-items: center; height: 34px; padding: 2px 3px 0; background: #fff; border-right: 1px solid #d0d0d0; gap: 8px; width: 212px; }
.dbrow > button { flex: 1; }
.treebox { flex: 1; min-height: 0; display: flex; flex-direction: column; margin: 0 1px 4px 3px; background: #fff; border: 1px solid #a0a0a0; overflow: hidden; }
.tree { flex: 1; overflow: hidden; }
.tree, .tree ul { list-style: none; margin: 0; padding: 0; }
.tree ul { padding-left: 18px; }
.tree li { position: relative; }
.tree li::before { content: ""; position: absolute; left: 6px; top: 0; bottom: 0; border-left: 1px dotted #888; }
.tree li:last-child::before { bottom: auto; height: 10px; }
.tree .top::before { top: 10px; }
.row { position: relative; display: flex; align-items: center; height: 21px; white-space: nowrap; }
.row.bare { gap: 2px; }
.row .ic { width: 16px; height: 16px; margin: 0 5px 0 1px; }
.tg { flex: none; width: 9px; height: 9px; margin: 0 3px 0 2px; background: linear-gradient(#4a62a8, #4a62a8) center / 5px 1px no-repeat #f6f6f6; border: 1px solid #8c8c8c; border-radius: 1px; }
.plus { background: linear-gradient(#4a62a8, #4a62a8) center / 5px 1px no-repeat, linear-gradient(#4a62a8, #4a62a8) center / 1px 5px no-repeat #f6f6f6; }
.tick { flex: none; width: 7px; margin-left: 7px; border-top: 1px dotted #888; }
.cur { border-bottom: 2px solid #000; line-height: 16px; }
.greek { font: italic 8px "Liberation Serif", serif; }
.greekL { font: italic bold 12px "Liberation Serif", serif; }
.lbl { font: bold 8px "DejaVu Sans", sans-serif; }
.mid { text-anchor: middle; }
.hscroll { display: flex; align-items: center; height: 17px; background: #f0f0f0; }
.track { flex: 1; }
.thumb { width: 75%; height: 15px; background: #cdcdcd; }

.work { flex: 1; min-width: 0; display: flex; flex-direction: column; padding-left: 4px; }
.context { display: flex; align-items: center; height: 32px; padding-left: 8px; background: linear-gradient(#fdfdfd, #ececec); }
.context label { margin-right: 5px; }
.context .combo + label { margin-left: 14px; }
.stage { flex: 1; min-height: 0; display: flex; }
.toolbox { width: 62px; flex: none; padding: 4px 2px 0; background: linear-gradient(90deg, #fdfdfd, #ececec); }
.tools { display: grid; grid-template-columns: 29px 28px; }
.tools + .tools { border-top: 2px solid #a4a4a6; padding-top: 5px; }
.tools button { position: relative; height: 28px; }
.gap { grid-column: 1 / 3; height: 5px; }
.tools .more::after { content: ""; position: absolute; right: 2px; bottom: 2px; border: 2px solid; border-color: transparent #000 #000 transparent; }
.tools .sel { background: #bcdcf4; border: 1px solid #90c8f6; }
.viewport { position: relative; flex: 1; border: solid #6c6c6c; border-width: 1px 0 0 1px; background: linear-gradient(#1c2c47, #2b3d57 50%, #304059 60%, #a2b0c8); }
.scene { position: absolute; inset: 0; overflow: visible; }
.axis { font: 13px "Liberation Sans", sans-serif; fill: #fff; }
.axisS { font: 9px "DejaVu Sans", sans-serif; fill: #f4e800; }
.num { position: absolute; width: 20px; height: 20px; border-radius: 50%; background: #ff3b3b; color: #fff; text-align: center; font-family: "Liberation Sans", sans-serif; z-index: 2; }
.tip { position: absolute; height: 34px; padding: 0 12px 0 5px; border-radius: 3px; background: rgba(0, 0, 0, .6); color: #fff; font: 16px/34px "Noto Sans CJK SC", sans-serif; white-space: nowrap; z-index: 2; }
.tip::before { content: ""; position: absolute; left: -4px; top: 13px; border: 4px solid transparent; border-left: 0; border-right-color: rgba(0, 0, 0, .6); }
.n1 { left: 52px; top: 96px; }
.n2 { left: 627px; top: 363px; }
.t2 { left: 656px; top: 356px; }
.n3 { left: 554px; top: 767px; }
.t3 { left: 583px; top: 760px; }

.prompt { display: flex; align-items: center; height: 37px; flex: none; border-top: 1px solid #b0b0b0; padding: 0 0 4px 7px; gap: 4px; background: linear-gradient(#fdfdfd, #ececec); }
.pb { width: 18px; height: 22px; background: #dcdcdc; border: 1px solid #a8a8a8; }
.prompt label { width: 364px; margin-left: 3px; white-space: nowrap; flex: none; }
.field { padding: 4px; border: 3px solid #ff3b3b; margin-left: -5px; z-index: 1; }
.field input { display: block; width: 184px; height: 25px; border: 1px solid #a0a0a0; padding: 0 3px; outline: 0; font: inherit; }
.field input::selection { background: #0078d7; color: #fff; }
.brand { display: flex; align-items: center; margin-left: auto; gap: 3px; color: #001a72; font: italic bold 16px "DejaVu Sans", sans-serif; }

.msgs { display: flex; height: 63px; flex: none; padding: 1px 14px 3px 0; border-top: 1px solid #aaa; background: #f0f0f0; overflow: hidden; }
.msgtabs { width: 39px; flex: none; display: flex; flex-direction: column; align-items: center; gap: 12px; padding-top: 6px; }
.msgtabs button { width: 24px; height: 24px; flex: none; border: 1px solid #999; background: #e8e8e8; }
.msgtabs .cli { background: #e8d878; border: 2px solid #222; }
.log { flex: 1; background: #fff; border: 1px solid #a0a0a0; padding: 3px 4px; font: 13px/13px "Liberation Mono", monospace; white-space: nowrap; overflow: hidden; }
```
